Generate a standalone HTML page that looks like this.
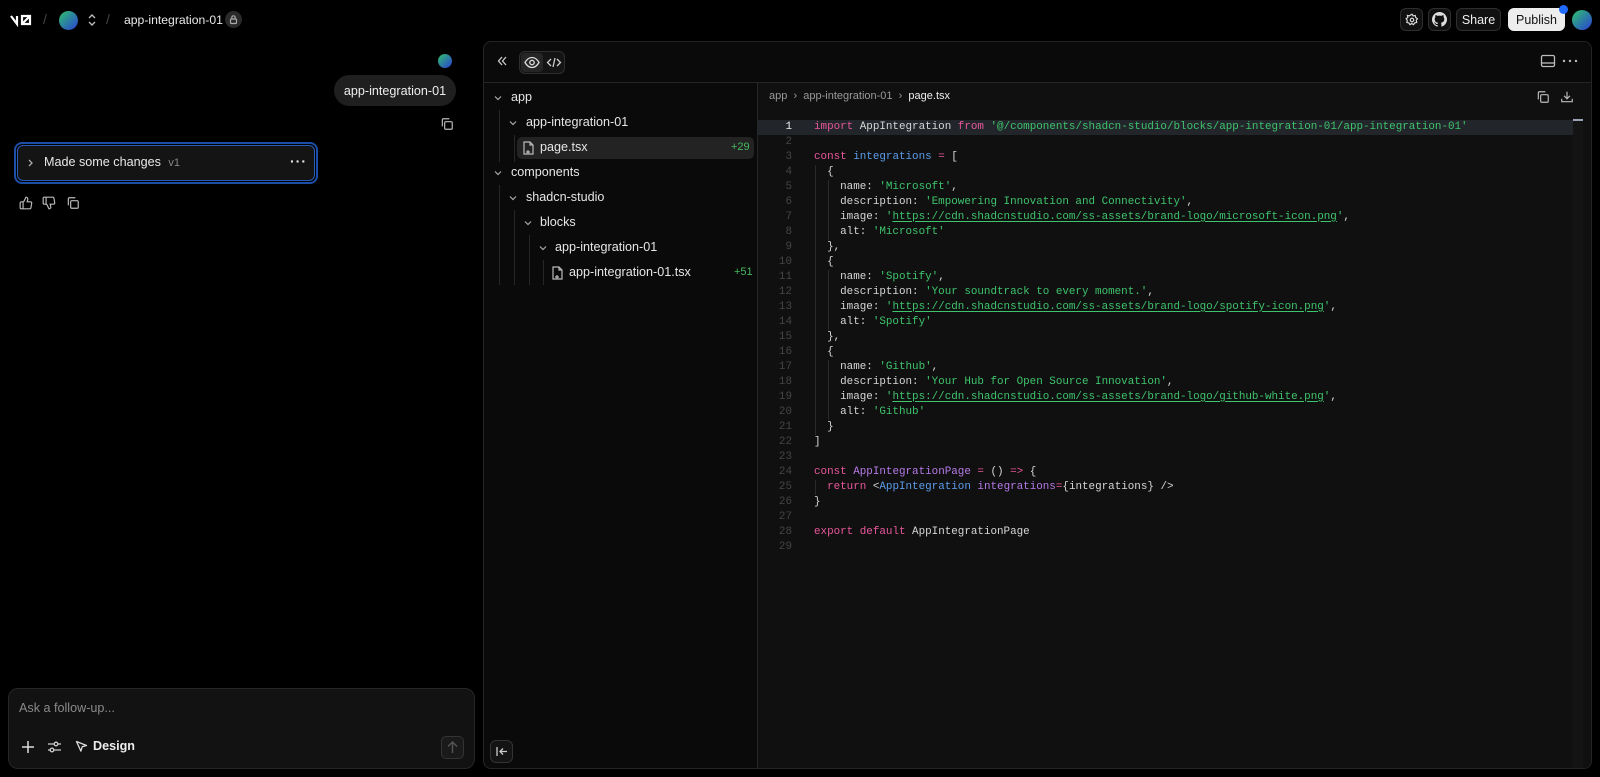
<!DOCTYPE html>
<html><head><meta charset="utf-8">
<style>
*{box-sizing:border-box;margin:0;padding:0}
body{width:1600px;height:777px;background:#000;color:#ededed;font-family:"Liberation Sans",sans-serif;overflow:hidden;position:relative}
.abs{position:absolute}
svg{display:block}
.btn{position:absolute;border:1px solid #2e2e2e;background:#111;border-radius:6px;display:flex;align-items:center;justify-content:center;font-size:13px}
.tree{position:absolute;font-size:12.6px;color:#e6e6e6;white-space:nowrap}
.gl{position:absolute;width:1px;background:#262626}
.code{position:absolute;left:814px;top:119.5px;font-family:"Liberation Mono",monospace;font-size:10.9px;line-height:15px;color:#d6d6d6;white-space:pre}
.nums{position:absolute;left:760px;width:32px;top:119.5px;font-family:"Liberation Mono",monospace;font-size:10.9px;line-height:15px;color:#454545;text-align:right;white-space:pre}
.k{color:#e9579c}.s{color:#3ec46d}.b{color:#5c9ded}.p{color:#b67ae8}
.u{text-decoration:underline;text-underline-offset:2px}
</style></head><body>
<!-- top bar -->
<svg class="abs" style="left:10px;top:13px" width="24" height="14" viewBox="0 0 24 14" fill="none" stroke="#fff" stroke-width="2.2"><path d="M1 3l6 8V3M12 3h8v8h-8zM12 11l8-8"/></svg>
<div class="abs" style="left:43px;top:11px;color:#444;font-size:14px">/</div>
<div class="abs" style="left:59px;top:11px;width:19px;height:19px;border-radius:50%;background:linear-gradient(135deg,#2fc26a,#2a3fd8)"></div>
<div class="abs" style="left:87px;top:13px"><svg width="10" height="14" viewBox="0 0 10 14"><path d="M2 5l3-3 3 3M2 9l3 3 3-3" stroke="#bbb" fill="none" stroke-width="1.4"/></svg></div>
<div class="abs" style="left:106px;top:11px;color:#444;font-size:14px">/</div>
<div class="abs" style="left:124px;top:13px;font-size:12.2px;color:#e8e8e8">app-integration-01</div>
<div class="abs" style="left:225px;top:11px;width:17px;height:17px;border-radius:50%;background:#2a2a2a"><svg width="17" height="17" viewBox="0 0 17 17"><rect x="5.5" y="8" width="6" height="4.5" rx="1" fill="none" stroke="#aaa" stroke-width="1.2"/><path d="M6.8 8V6.5a1.7 1.7 0 013.4 0V8" fill="none" stroke="#aaa" stroke-width="1.2"/></svg></div>

<div class="btn" style="left:1400px;top:8px;width:23px;height:23px"><svg width="14" height="14" viewBox="0 0 24 24" fill="none" stroke="#ddd" stroke-width="2"><circle cx="12" cy="12" r="3"/><path d="M12 2l2 3 3.5-.8.8 3.5 3 2-2 3 .8 3.5-3.5.8-2 3-3-2-3 2-2-3-3.5-.8.8-3.5-2-3 3-2-.8-3.5 3.5.8z"/></svg></div>
<div class="btn" style="left:1428px;top:8px;width:23px;height:23px"><svg width="15" height="15" viewBox="0 0 16 16"><path fill="#ddd" d="M8 0C3.6 0 0 3.6 0 8c0 3.5 2.3 6.5 5.5 7.6.4.1.5-.2.5-.4v-1.4c-2.2.5-2.7-1-2.7-1-.4-.9-.9-1.2-.9-1.2-.7-.5.1-.5.1-.5.8.1 1.2.8 1.2.8.7 1.3 1.900.9 2.300.7.1-.5.3-.9.5-1.1-1.8-.2-3.6-.9-3.6-4 0-.9.3-1.6.8-2.1-.1-.2-.4-1 .1-2.1 0 0 .7-.2 2.2.8.6-.2 1.3-.3 2-.3s1.4.1 2 .3c1.5-1 2.2-.8 2.2-.8.4 1.1.2 1.9.1 2.1.5.6.8 1.3.8 2.1 0 3.1-1.9 3.7-3.6 3.9.3.3.5.8.5 1.5v2.2c0 .2.1.5.6.4C13.7 14.5 16 11.5 16 8c0-4.4-3.6-8-8-8z"/></svg></div>
<div class="btn" style="left:1456px;top:8px;width:45px;height:23px;color:#eee;font-size:12.5px">Share</div>
<div class="btn" style="left:1508px;top:8px;width:57px;height:23px;background:#ededed;color:#111;border-color:#ededed;font-size:12.5px">Publish</div>
<div class="abs" style="left:1559px;top:5px;width:9px;height:9px;border-radius:50%;background:#1f6bff"></div>
<div class="abs" style="left:1572px;top:10px;width:20px;height:20px;border-radius:50%;background:linear-gradient(135deg,#2fc26a,#2a3fd8)"></div>

<!-- chat -->
<div class="abs" style="left:438px;top:54px;width:14px;height:14px;border-radius:50%;background:linear-gradient(135deg,#2fc26a,#2a3fd8)"></div>
<div class="abs" style="left:334px;top:75px;width:122px;height:31px;border-radius:16px;background:#1f1f1f;font-size:12.6px;color:#eee;display:flex;align-items:center;justify-content:center">app-integration-01</div>
<div class="abs" style="left:440px;top:117px"><svg width="14" height="14" viewBox="0 0 24 24" fill="none" stroke="#bbb" stroke-width="2"><rect x="8" y="8" width="13" height="13" rx="2"/><path d="M4 16V5a2 2 0 012-2h10"/></svg></div>
<div class="abs" style="left:14px;top:142px;width:304px;height:42px;border:2px solid #1d4ea6;border-radius:8px"></div>
<div class="abs" style="left:17px;top:145px;width:298px;height:36px;border:1px solid #2a5bb8;border-radius:6px;background:#141414"></div>
<div class="abs" style="left:27px;top:158px"><svg width="8" height="10" viewBox="0 0 8 10"><path d="M2 2l3 3-3 3" stroke="#aaa" fill="none" stroke-width="1.3"/></svg></div>
<div class="abs" style="left:44px;top:155px;font-size:12.6px;color:#e8e8e8">Made some changes <span style="color:#888;font-size:11px;margin-left:4px">v1</span></div>
<div class="abs" style="left:290px;top:154px;color:#eee;font-size:14px;font-weight:bold;letter-spacing:1px;line-height:14px">···</div>
<div class="abs" style="left:19px;top:196px"><svg width="14" height="14" viewBox="0 0 24 24" fill="none" stroke="#bbb" stroke-width="2"><path d="M7 10v12M15 5.9L14 10h5.8a2 2 0 012 2.3l-1.4 8A2 2 0 0118.4 22H4a2 2 0 01-2-2v-8a2 2 0 012-2h2.8a2 2 0 001.8-1.1L12 2a3 3 0 013 3.9z"/></svg></div>
<div class="abs" style="left:42px;top:196px"><svg width="14" height="14" viewBox="0 0 24 24" fill="none" stroke="#bbb" stroke-width="2" style="transform:scaleY(-1)"><path d="M7 10v12M15 5.9L14 10h5.8a2 2 0 012 2.3l-1.4 8A2 2 0 0118.4 22H4a2 2 0 01-2-2v-8a2 2 0 012-2h2.8a2 2 0 001.8-1.1L12 2a3 3 0 013 3.9z"/></svg></div>
<div class="abs" style="left:66px;top:196px"><svg width="14" height="14" viewBox="0 0 24 24" fill="none" stroke="#bbb" stroke-width="2"><rect x="8" y="8" width="13" height="13" rx="2"/><path d="M4 16V5a2 2 0 012-2h10"/></svg></div>

<!-- input -->
<div class="abs" style="left:8px;top:688px;width:467px;height:81px;border:1px solid #262626;border-radius:10px;background:#121212"></div>
<div class="abs" style="left:19px;top:701px;font-size:12.6px;color:#8a8a8a">Ask a follow-up...</div>
<div class="abs" style="left:21px;top:740px"><svg width="14" height="14" viewBox="0 0 14 14"><path d="M7 1v12M1 7h12" stroke="#ddd" stroke-width="1.5"/></svg></div>
<div class="abs" style="left:47px;top:740px"><svg width="15" height="14" viewBox="0 0 15 14" fill="none" stroke="#ccc" stroke-width="1.3"><path d="M1 4h13M1 10h13"/><circle cx="9" cy="4" r="1.8" fill="#121212"/><circle cx="5" cy="10" r="1.8" fill="#121212"/></svg></div>
<div class="abs" style="left:75px;top:740px"><svg width="13" height="13" viewBox="0 0 13 13"><path d="M1.5 1.5l10 4-4.3 1.3-1.3 4.3z" stroke="#ddd" fill="none" stroke-width="1.3" stroke-linejoin="round"/></svg></div>
<div class="abs" style="left:93px;top:739px;font-size:12.6px;color:#eee;font-weight:bold">Design</div>
<div class="abs" style="left:441px;top:736px;width:23px;height:23px;border:1px solid #333;border-radius:5px;background:#1a1a1a"><svg width="21" height="21" viewBox="0 0 21 21"><path d="M10.5 16V5M6 9.5l4.5-4.5 4.5 4.5" stroke="#555" fill="none" stroke-width="1.4"/></svg></div>

<!-- main panel -->
<div class="abs" style="left:483px;top:41px;width:1109px;height:728px;border:1px solid #242424;border-radius:8px;background:#0a0a0a"></div>
<div class="abs" style="left:484px;top:82px;width:1107px;height:1px;background:#262626"></div>
<div class="abs" style="left:757px;top:83px;width:1px;height:685px;background:#262626"></div>
<div class="abs" style="left:758px;top:83px;width:833px;height:685px;background:#101010;border-bottom-right-radius:8px"></div>
<div class="abs" style="left:496px;top:55px"><svg width="12" height="12" viewBox="0 0 12 12" fill="none" stroke="#ccc" stroke-width="1.3"><path d="M6 2L2.5 6 6 10M10 2L6.5 6 10 10"/></svg></div>
<div class="abs" style="left:519px;top:51px;width:46px;height:23px;border:1px solid #2e2e2e;border-radius:6px;background:#141414"></div>
<div class="abs" style="left:521px;top:53px;width:22px;height:19px;border-radius:4px;background:#262626"><svg width="22" height="19" viewBox="0 0 22 19" fill="none" stroke="#ddd" stroke-width="1.3"><path d="M4 9.5C6 6 8.5 4.5 11 4.5S16 6 18 9.5C16 13 13.5 14.5 11 14.5S6 13 4 9.5z"/><circle cx="11" cy="9.5" r="2.2"/></svg></div>
<div class="abs" style="left:544px;top:53px"><svg width="20" height="19" viewBox="0 0 20 19" fill="none" stroke="#ccc" stroke-width="1.3"><path d="M7 6l-3.5 3.5L7 13M13 6l3.5 3.5L13 13M11 5l-2 9"/></svg></div>
<div class="abs" style="left:1540px;top:54px"><svg width="16" height="14" viewBox="0 0 16 14" fill="none" stroke="#bbb" stroke-width="1.3"><rect x="1.5" y="1.5" width="13" height="11" rx="1.5"/><path d="M1.5 9h13"/></svg></div>
<svg class="abs" style="left:1562px;top:59px" width="16" height="4"><circle cx="2" cy="2" r="1.2" fill="#bbb"/><circle cx="8" cy="2" r="1.2" fill="#bbb"/><circle cx="14" cy="2" r="1.2" fill="#bbb"/></svg>

<!-- tree -->
<div class="abs" style="left:517px;top:137px;width:237px;height:22px;border-radius:5px;background:#232323"></div>
<div class="gl" style="left:499px;top:110px;height:52px"></div>
<div class="gl" style="left:514px;top:135px;height:27px"></div>
<div class="gl" style="left:499px;top:185px;height:100px"></div>
<div class="gl" style="left:514px;top:210px;height:75px"></div>
<div class="gl" style="left:529px;top:235px;height:50px"></div>
<div class="gl" style="left:543px;top:260px;height:25px"></div>
<svg class="abs" style="left:0;top:0" width="760" height="300" fill="none" stroke="#aaa" stroke-width="1.2">
<path d="M495 96.5l3 3 3-3M510 121.5l3 3 3-3M495 171.5l3 3 3-3M510 196.5l3 3 3-3M525 221.5l3 3 3-3M540 246.5l3 3 3-3"/>
<path d="M524 142h6l3 3v9h-9zM530 142v3h3M526 152h4M528 150v4" stroke="#bbb"/>
<path d="M553 267h6l3 3v9h-9zM559 267v3h3M555 277h4M557 275v4" stroke="#bbb"/>
</svg>
<div class="tree" style="left:511px;top:90px">app</div>
<div class="tree" style="left:526px;top:115px">app-integration-01</div>
<div class="tree" style="left:540px;top:140px">page.tsx</div>
<div class="tree" style="left:731px;top:141px;font-size:11px;color:#46b85e">+29</div>
<div class="tree" style="left:511px;top:165px">components</div>
<div class="tree" style="left:526px;top:190px">shadcn-studio</div>
<div class="tree" style="left:540px;top:215px">blocks</div>
<div class="tree" style="left:555px;top:240px">app-integration-01</div>
<div class="tree" style="left:569px;top:265px">app-integration-01.tsx</div>
<div class="tree" style="left:734px;top:266px;font-size:11px;color:#46b85e">+51</div>
<div class="abs" style="left:490px;top:740px;width:23px;height:23px;border:1px solid #333;border-radius:6px;background:#141414"><svg width="21" height="21" viewBox="0 0 21 21" fill="none" stroke="#ccc" stroke-width="1.3"><path d="M6 6v9M16 10.5H9M12 7.5l-3 3 3 3"/></svg></div>

<!-- code header -->
<div class="abs" style="left:769px;top:90px;font-size:11px;color:#999">app &nbsp;›&nbsp; app-integration-01 &nbsp;›&nbsp; <span style="color:#eee">page.tsx</span></div>
<div class="abs" style="left:1536px;top:90px"><svg width="14" height="14" viewBox="0 0 24 24" fill="none" stroke="#bbb" stroke-width="2"><rect x="8" y="8" width="13" height="13" rx="2"/><path d="M4 16V5a2 2 0 012-2h10"/></svg></div>
<div class="abs" style="left:1560px;top:90px"><svg width="14" height="14" viewBox="0 0 24 24" fill="none" stroke="#bbb" stroke-width="2"><path d="M12 3v12M7 10l5 5 5-5M3 15v5h18v-5"/></svg></div>

<!-- code -->
<div class="abs" style="left:758px;top:120px;width:815px;height:15px;background:#22252a"></div>
<div class="abs" style="left:1573px;top:118px;width:10px;height:650px;background:#141414"></div>
<div class="abs" style="left:1573px;top:119px;width:10px;height:2px;background:#9aa3b5"></div>
<div class="gl" style="left:815px;top:165px;height:270px;background:#2a2a2a"></div>
<div class="gl" style="left:828px;top:180px;height:60px;background:#2a2a2a"></div>
<div class="gl" style="left:828px;top:270px;height:60px;background:#2a2a2a"></div>
<div class="gl" style="left:828px;top:360px;height:60px;background:#2a2a2a"></div>
<div class="gl" style="left:815px;top:480px;height:15px;background:#2a2a2a"></div>
<div class="nums"><span style="color:#eee">1</span>
2
3
4
5
6
7
8
9
10
11
12
13
14
15
16
17
18
19
20
21
22
23
24
25
26
27
28
29</div>
<div class="code"><span class="k">import</span> AppIntegration <span class="k">from</span> <span class="s">'@/components/shadcn-studio/blocks/app-integration-01/app-integration-01'</span>

<span class="k">const</span> <span class="b">integrations</span> <span class="k">=</span> [
  {
    name: <span class="s">'Microsoft'</span>,
    description: <span class="s">'Empowering Innovation and Connectivity'</span>,
    image: <span class="s">'<span class="u">https://cdn.shadcnstudio.com/ss-assets/brand-logo/microsoft-icon.png</span>'</span>,
    alt: <span class="s">'Microsoft'</span>
  },
  {
    name: <span class="s">'Spotify'</span>,
    description: <span class="s">'Your soundtrack to every moment.'</span>,
    image: <span class="s">'<span class="u">https://cdn.shadcnstudio.com/ss-assets/brand-logo/spotify-icon.png</span>'</span>,
    alt: <span class="s">'Spotify'</span>
  },
  {
    name: <span class="s">'Github'</span>,
    description: <span class="s">'Your Hub for Open Source Innovation'</span>,
    image: <span class="s">'<span class="u">https://cdn.shadcnstudio.com/ss-assets/brand-logo/github-white.png</span>'</span>,
    alt: <span class="s">'Github'</span>
  }
]

<span class="k">const</span> <span class="p">AppIntegrationPage</span> <span class="k">=</span> () <span class="k">=&gt;</span> {
  <span class="k">return</span> &lt;<span class="b">AppIntegration</span> <span class="p">integrations</span><span class="k">=</span>{integrations} /&gt;
}

<span class="k">export</span> <span class="k">default</span> AppIntegrationPage
</div>
</body></html>
